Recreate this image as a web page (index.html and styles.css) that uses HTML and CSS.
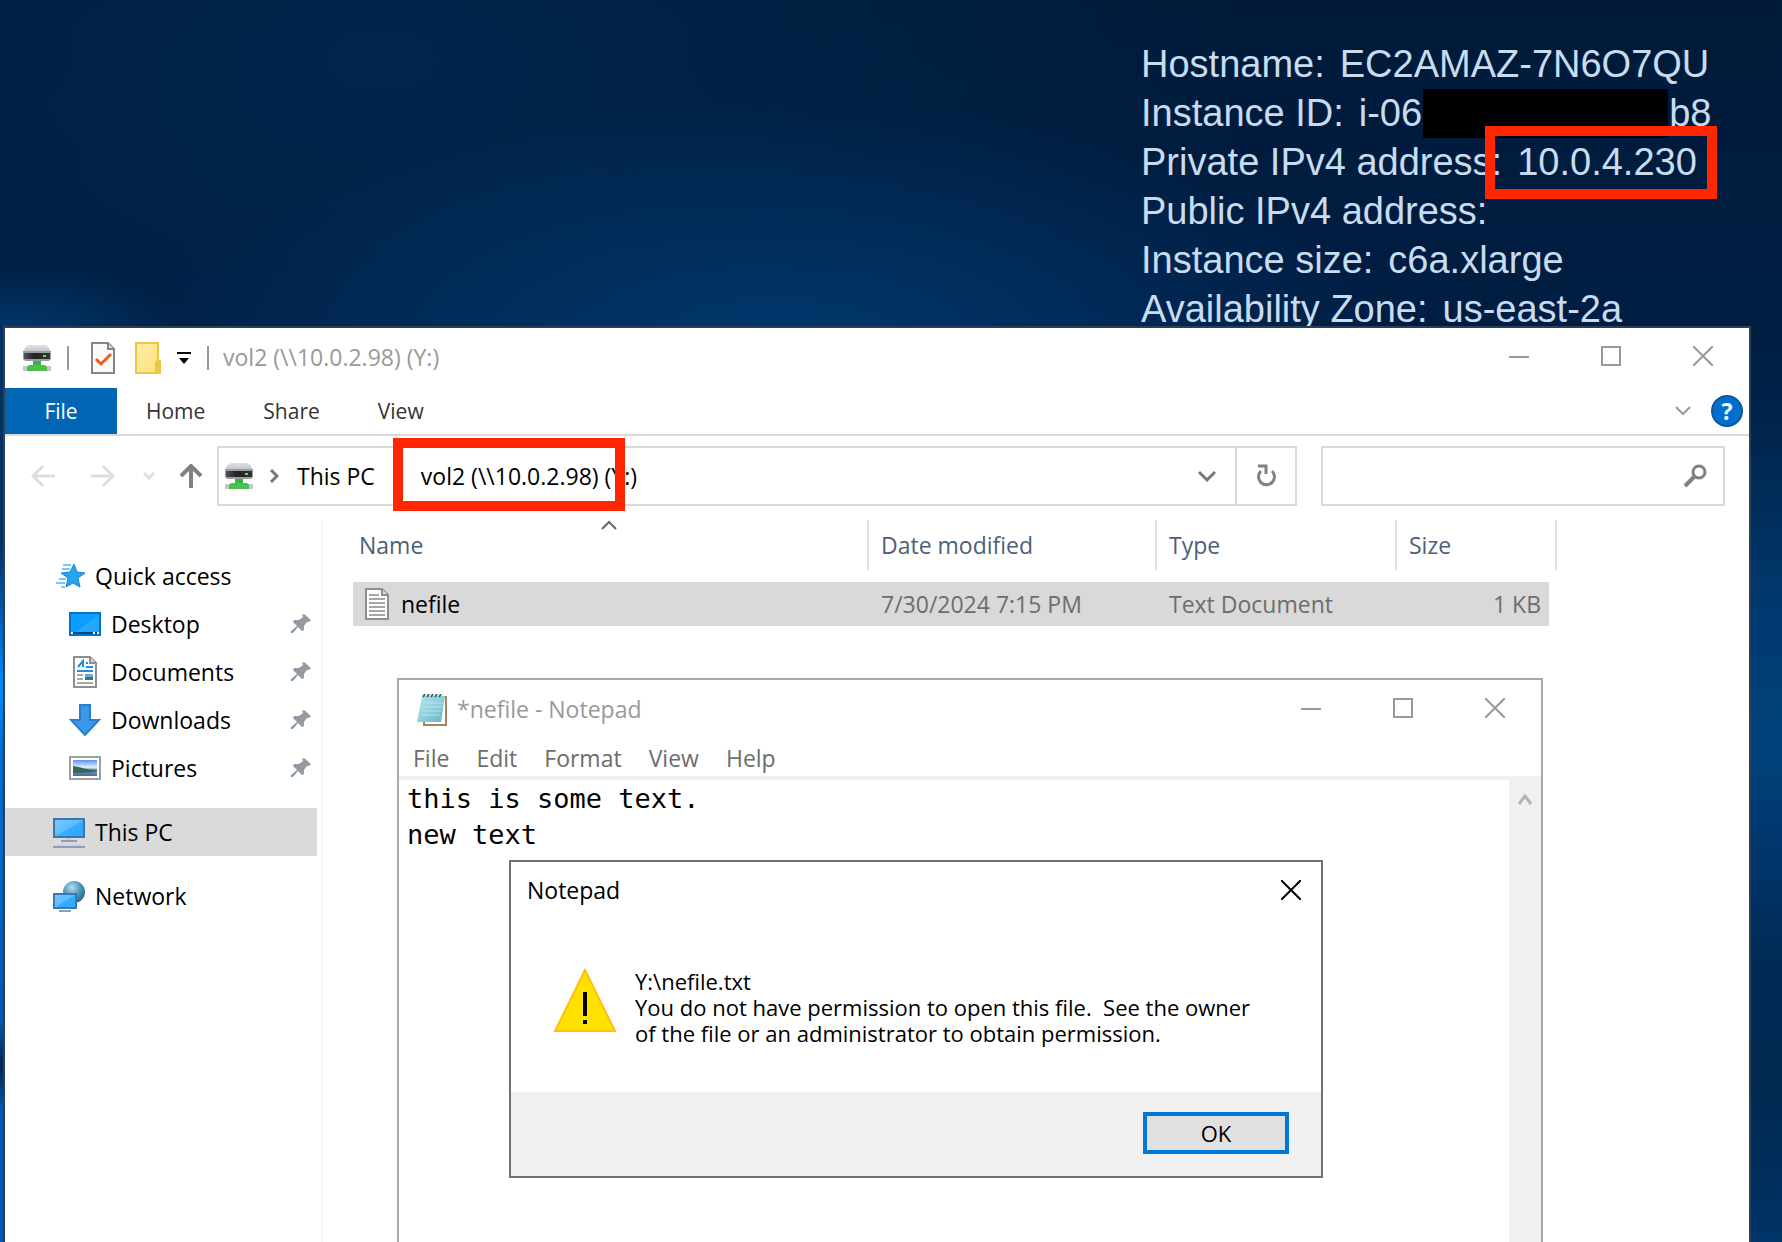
FILE: index.html
```html
<!DOCTYPE html>
<html lang="en">
<head>
<meta charset="utf-8">
<title>vol2 (\\10.0.2.98) (Y:)</title>
<link rel="stylesheet" href="styles.css">
</head>
<body>
<svg class="sprite" aria-hidden="true">
  <defs>
    <linearGradient id="g-shell" x1="0" y1="0" x2="0" y2="1"><stop offset="0" stop-color="#dfe2e6"/><stop offset="1" stop-color="#bfc3c8"/></linearGradient>
    <linearGradient id="g-face" x1="0" y1="0" x2="1" y2="0"><stop offset="0" stop-color="#555"/><stop offset=".4" stop-color="#222"/><stop offset="1" stop-color="#333"/></linearGradient>
    <linearGradient id="g-folder" x1="0" y1="0" x2="1" y2="1"><stop offset="0" stop-color="#ffeeaa"/><stop offset="1" stop-color="#ffdf78"/></linearGradient>
    <linearGradient id="g-screen" x1="0" y1="0" x2="1" y2="1"><stop offset="0" stop-color="#7cc8ff"/><stop offset=".5" stop-color="#5cbcff"/><stop offset=".52" stop-color="#38adff"/><stop offset="1" stop-color="#2ba6fb"/></linearGradient>
    <linearGradient id="g-desk" x1="0" y1="0" x2="1" y2="1"><stop offset="0" stop-color="#0a9cff"/><stop offset=".5" stop-color="#0c9dff"/><stop offset=".55" stop-color="#27a9ff"/><stop offset="1" stop-color="#1ca4ff"/></linearGradient>
    <linearGradient id="g-sky" x1="0" y1="0" x2="0" y2="1"><stop offset="0" stop-color="#5a93f5"/><stop offset=".45" stop-color="#e2f0fb"/><stop offset=".6" stop-color="#7f9fae"/><stop offset="1" stop-color="#3f6ea8"/></linearGradient>
    <radialGradient id="g-globe" cx=".4" cy=".3" r=".8"><stop offset="0" stop-color="#b9dcea"/><stop offset=".5" stop-color="#4a97bd"/><stop offset="1" stop-color="#1f5878"/></radialGradient>
    <linearGradient id="g-pad" x1="0" y1="0" x2="1" y2="1"><stop offset="0" stop-color="#b8e6ef"/><stop offset=".5" stop-color="#8fd0de"/><stop offset="1" stop-color="#62b1c6"/></linearGradient>
    <symbol id="i-drive" viewBox="0 0 28 26"><path d="M5 0h18l3 3 2 4H0l2-4z" fill="url(#g-shell)"/><path d="M0 6h28v8l-2 2H2l-2-2z" fill="#9a9da1"/><path d="M1 8h26v6H1z" fill="url(#g-face)"/><path d="M20 10h3v2h-3z" fill="#35ff35"/><path d="M10 16h8v4h-8z" fill="#35b24a"/><path d="M0 21h28v5H0z" fill="#c4c8c6"/><path d="M6 20h16l2 2v4H4v-4z" fill="#4cc04c"/></symbol>
    <symbol id="i-check" viewBox="0 0 24 32"><path d="M1 1h16l6 6v24H1z" fill="#fafafa" stroke="#858585" stroke-width="2"/><path d="M17 1v6h6" fill="#ddd" stroke="#858585" stroke-width="2"/><path d="M5 17l5 5 10-10" fill="none" stroke="#f4591c" stroke-width="3"/></symbol>
    <symbol id="i-folder" viewBox="0 0 26 32"><path d="M1 1h22v18h2v12H1z" fill="url(#g-folder)" stroke="#ecc544" stroke-width="2"/><path d="M21 31V20l2-1v12" fill="none" stroke="#ecc544" stroke-width="2"/></symbol>
    <symbol id="i-pin" viewBox="0 0 20 20"><path d="M13 0l7 6-2 2h-2l-3 4v4l-2 1-4-4-5 6H0v-2l6-5-4-4 1-2h5l4-3-1-2z" fill="#929ba4"/></symbol>
    <symbol id="i-min" viewBox="0 0 20 20"><path d="M0 11h20" fill="none" stroke="currentColor" stroke-width="2"/></symbol>
    <symbol id="i-max" viewBox="0 0 20 20"><path d="M1 1h18v18H1z" fill="none" stroke="currentColor" stroke-width="2"/></symbol>
    <symbol id="i-close" viewBox="0 0 20 20"><path d="M0 0l20 20M20 0L0 20" fill="none" stroke="currentColor" stroke-width="2"/></symbol>
    <symbol id="i-down" viewBox="0 0 18 12"><path d="M2 2l7 7 7-7" fill="none" stroke="currentColor" stroke-width="2"/></symbol>
  </defs>
</svg>
<main class="desktop">
  <dl class="info">
    <div><dt>Hostname:</dt><dd>EC2AMAZ-7N6O7QU</dd></div>
    <div><dt>Instance ID:</dt><dd>i-06<span class="redacted"></span>b8</dd></div>
    <div><dt>Private IPv4 address:</dt><dd>10.0.4.230</dd></div>
    <div><dt>Public IPv4 address:</dt><dd></dd></div>
    <div><dt>Instance size:</dt><dd>c6a.xlarge</dd></div>
    <div><dt>Availability Zone:</dt><dd>us-east-2a</dd></div>
  </dl>

  <section class="explorer">
    <header class="titlebar">
      <div class="quick-tools">
        <svg class="drive"><use href="#i-drive"/></svg>
        <span class="rule"></span>
        <button aria-label="Properties"><svg width="24" height="32"><use href="#i-check"/></svg></button>
        <button aria-label="New folder"><svg width="26" height="32"><use href="#i-folder"/></svg></button>
        <button class="customize" aria-label="Customize"><svg width="14" height="14" viewBox="0 0 14 14"><path d="M0 1h14v2H0zM2 7h10L7 13z"/></svg></button>
        <span class="rule"></span>
      </div>
      <h1 class="title">vol2 (\\10.0.2.98) (Y:)</h1>
      <div class="controls">
        <button aria-label="Minimize"><svg><use href="#i-min"/></svg></button>
        <button aria-label="Maximize"><svg><use href="#i-max"/></svg></button>
        <button aria-label="Close"><svg><use href="#i-close"/></svg></button>
      </div>
    </header>
    <nav class="ribbon">
      <button class="tab file">File</button>
      <button class="tab">Home</button>
      <button class="tab">Share</button>
      <button class="tab">View</button>
      <button class="expand" aria-label="Expand ribbon"><svg width="18" height="12"><use href="#i-down"/></svg></button>
      <button class="help" aria-label="Help">?</button>
    </nav>
    <div class="address-row">
      <div class="history">
        <button aria-label="Back"><svg width="24" height="24" viewBox="0 0 24 24"><path d="M24 12H2M12 2L2 12l10 10" fill="none" stroke="#dedede" stroke-width="3"/></svg></button>
        <button aria-label="Forward"><svg width="24" height="24" viewBox="0 0 24 24"><path d="M0 12h22M12 2l10 10-10 10" fill="none" stroke="#dedede" stroke-width="3"/></svg></button>
        <button aria-label="Recent"><svg width="12" height="8" viewBox="0 0 12 8"><path d="M1 1l5 5 5-5" fill="none" stroke="#dedede" stroke-width="3"/></svg></button>
        <button aria-label="Up"><svg width="24" height="24" viewBox="0 0 24 24"><path d="M12 24V2M2 12L12 2l10 10" fill="none" stroke="#808080" stroke-width="4"/></svg></button>
      </div>
      <div class="address">
        <svg class="drive"><use href="#i-drive"/></svg>
        <svg class="crumb-arrow" width="10" height="14" viewBox="0 0 10 14"><path d="M2 1l6 6-6 6" fill="none" stroke="#777" stroke-width="3"/></svg>
        <button class="crumb">This PC</button>
        <button class="crumb last">vol2 (\\10.0.2.98) (Y:)</button>
        <button class="drop" aria-label="Previous locations"><svg width="18" height="14" viewBox="0 0 18 14"><path d="M1 3l8 8 8-8" fill="none" stroke="#777" stroke-width="3"/></svg></button>
        <button class="refresh" aria-label="Refresh"><svg width="22" height="24" viewBox="0 0 22 24"><path d="M17 7a8 8 0 1 1-11 0M3 2h8v8" fill="none" stroke="#808080" stroke-width="3"/></svg></button>
      </div>
      <label class="search"><input type="search" aria-label="Search"><svg width="24" height="24" viewBox="0 0 24 24"><circle cx="16" cy="8" r="6" fill="none" stroke="#808080" stroke-width="3"/><path d="M12 12L2 22" stroke="#808080" stroke-width="4"/></svg></label>
    </div>
    <div class="panes">
      <nav class="tree">
        <a href="#" class="item"><svg width="30" height="26" viewBox="0 0 30 26"><path d="M19 1l3 8 8 1-7 5 2 9-7-4-7 4 2-9-7-5 9-1z" fill="#25a5ee" stroke="#1688cf"/><path d="M8 2h8M7 6h8M4 16h7M1 20h9M6 24h4" stroke="#7fc6f2" stroke-width="2"/></svg>Quick access</a>
        <a href="#" class="item sub"><svg width="32" height="24" viewBox="0 0 32 24"><path d="M1 1h30v22H1z" fill="url(#g-desk)" stroke="#0074c6" stroke-width="2"/><path d="M2 21h28" stroke="#00477c" stroke-width="2"/><path d="M2 21h2M24 21h2M28 21h2" stroke="#fff" stroke-width="2"/></svg>Desktop<svg class="pin"><use href="#i-pin"/></svg></a>
        <a href="#" class="item sub"><svg width="32" height="32" viewBox="0 0 32 32"><path d="M5 1h16l6 6v24H5z" fill="#fff" stroke="#8e8e8e" stroke-width="2"/><path d="M21 1v6h6" fill="#ddd" stroke="#8e8e8e" stroke-width="2"/><path d="M9 11l5-6v6M17 7h2M17 11h7M8 15h16" stroke="#1e90dc" stroke-width="2" fill="none"/><path d="M8 19h6M8 23h6M8 27h16" stroke="#a9a9a9" stroke-width="2"/><path d="M16 18h8v3h-8z" fill="#6ba5ef"/><path d="M16 21h8v3h-8z" fill="#3d7a5c"/></svg>Documents<svg class="pin"><use href="#i-pin"/></svg></a>
        <a href="#" class="item sub"><svg width="32" height="32" viewBox="0 0 32 32"><path d="M11 1h10v15h9L16 31 2 16h9z" fill="#3b98e8" stroke="#2a7dc9" stroke-width="2"/></svg>Downloads<svg class="pin"><use href="#i-pin"/></svg></a>
        <a href="#" class="item sub"><svg width="32" height="24" viewBox="0 0 32 24"><path d="M1 1h30v22H1z" fill="#fff" stroke="#a0a0a0" stroke-width="2"/><path d="M4 4h24v16H4z" fill="url(#g-sky)"/><path d="M4 10c8 1 14 4 24 4v1c-8 2-16 2-24 2z" fill="#3a6659"/></svg>Pictures<svg class="pin"><use href="#i-pin"/></svg></a>
        <a href="#" class="item group selected"><svg width="32" height="32" viewBox="0 0 32 32"><path d="M1 3h30v18H1z" fill="url(#g-screen)" stroke="#3878ac" stroke-width="2"/><path d="M14 22h4v2h-4z" fill="#c5cede"/><path d="M8 25h16M0 31h32" stroke="#8f9dbd" stroke-width="2"/><path d="M4 29h24" stroke="#c5cede"/></svg>This PC</a>
        <a href="#" class="item group"><svg width="32" height="32" viewBox="0 0 32 32"><circle cx="21" cy="12" r="11" fill="url(#g-globe)"/><path d="M1 14h22v14H1z" fill="url(#g-screen)" stroke="#3878ac" stroke-width="2"/><path d="M6 31h12" stroke="#8f9dbd" stroke-width="2"/></svg>Network</a>
      </nav>
      <table class="files">
        <colgroup><col class="c-name"><col class="c-date"><col class="c-type"><col class="c-size"></colgroup>
        <thead><tr><th><svg class="sort" width="16" height="10" viewBox="0 0 16 10"><path d="M1 9l7-7 7 7" fill="none" stroke="#666" stroke-width="2"/></svg>Name</th><th>Date modified</th><th>Type</th><th>Size</th></tr></thead>
        <tbody><tr><td><span class="filename"><svg width="24" height="32" viewBox="0 0 24 32"><path d="M1 1h16l6 6v24H1z" fill="#fff" stroke="#8e8e8e" stroke-width="2"/><path d="M17 1v6h6" fill="#ddd" stroke="#8e8e8e" stroke-width="2"/><path d="M4 7h10M4 11h16M4 15h16M4 19h16M4 23h16M4 27h16" stroke="#a6a6a6" stroke-width="2"/></svg>nefile</span></td><td>7/30/2024 7:15 PM</td><td>Text Document</td><td>1 KB</td></tr></tbody>
      </table>
    </div>
  </section>

  <section class="notepad">
    <header class="titlebar">
      <svg class="app-icon" width="32" height="32" viewBox="0 0 32 32"><path d="M8 4l22-1v28H8z" fill="#fff" stroke="#a5815c" stroke-width="2"/><path d="M6 2h23l-4 26H1z" fill="url(#g-pad)"/><path d="M7 9h20M6 13h20M6 17h19M5 21h19" stroke="#b6e2ea"/><path d="M7 3l2-3M11 3l2-3M15 3l2-3M19 3l2-3M23 3l2-3" stroke="#3f6670" stroke-width="2"/></svg>
      <h2 class="title">*nefile - Notepad</h2>
      <div class="controls">
        <button aria-label="Minimize"><svg><use href="#i-min"/></svg></button>
        <button aria-label="Maximize"><svg><use href="#i-max"/></svg></button>
        <button aria-label="Close"><svg><use href="#i-close"/></svg></button>
      </div>
    </header>
    <nav class="menu"><button>File</button><button>Edit</button><button>Format</button><button>View</button><button>Help</button></nav>
    <div class="editor">
      <textarea aria-label="Text" spellcheck="false">this is some text.
new text</textarea>
      <div class="scrollbar"><button aria-label="Scroll up"><svg width="16" height="14" viewBox="0 0 16 14"><path d="M2 12l6-8 6 8" fill="none" stroke="#b4b4b4" stroke-width="3"/></svg></button></div>
    </div>
  </section>

  <section class="dialog" role="alertdialog" aria-labelledby="dlg-title">
    <header class="dialog-head">
      <h2 id="dlg-title">Notepad</h2>
      <button aria-label="Close"><svg width="20" height="20"><use href="#i-close"/></svg></button>
    </header>
    <div class="dialog-body">
      <svg width="64" height="64" viewBox="0 0 64 64"><path d="M32 2l30 61H2z" fill="#ffe100" stroke="#ffbf0c" stroke-width="2"/><path d="M30 24h4v24h-4zM30 52h4v4h-4z"/></svg>
      <p>Y:\nefile.txt<br>You do not have permission to open this file.&nbsp; See the owner<br>of the file or an administrator to obtain permission.</p>
    </div>
    <footer class="dialog-foot"><button class="ok">OK</button></footer>
  </section>

  <div class="mark mark-ip"></div>
  <div class="mark mark-share"></div>
</main>
</body>
</html>
```

FILE: styles.css
```css
* { box-sizing: border-box; }
body { margin: 0; font-family: "Open Sans", "Noto Sans", sans-serif; font-size: 23px; line-height: 32px; color: #000; }
button { margin: 0; padding: 0; border: 0; background: none; font: inherit; color: inherit; }
h1, h2, p, dl, dd { margin: 0; font-size: inherit; font-weight: 400; }
svg { display: block; flex: none; }
.sprite { position: absolute; width: 0; height: 0; }

.desktop {
  position: relative;
  height: 100vh;
  overflow: hidden;
  background:
    linear-gradient(#003062, #002f62 214px, #0050a0 274px, #0088ff 359px, #006cd0 424px, #0058b0 694px, #002450 739px, #0058b0 784px, #0060c0) 0 326px / 5px 100% no-repeat,
    linear-gradient(#001e40, #002048 60px, #002a55 150px, #003a70 290px, #00427c 420px, #003870 500px, #002a55 640px, #002850 760px, #003468 920px) 100% 326px / 33px 100% no-repeat,
    radial-gradient(190px 70px at 0 336px, #003a70, #003a7000),
    radial-gradient(620px 250px at 780px 350px, #00386e, #00386e00),
    radial-gradient(900px 500px at 380px 60px, #00264c, #00264c00),
    linear-gradient(#001a38, #001e44 330px, #002a55);
}

.info {
  position: absolute;
  left: 1141px;
  top: 40px;
  font-family: "Liberation Sans", Arial, sans-serif;
  font-size: 38px;
  line-height: 49px;
  color: #c8dcf0;
  white-space: nowrap;
}
.info > div { display: flex; gap: 15px; }
.info dd { display: flex; }
.redacted { width: 245px; margin: 0 1px; background: #000; }

.explorer {
  position: absolute;
  left: 3px;
  right: 31px;
  top: 326px;
  bottom: 0;
  display: flex;
  flex-direction: column;
  border: 2px solid #2b3f55;
  border-bottom: 0;
  background: #fff;
}
.titlebar { display: flex; align-items: center; height: 60px; color: #999; }
.title { flex: 1; padding-bottom: 2px; }
.controls { display: flex; padding-bottom: 4px; }
.controls button { display: grid; place-items: center; width: 92px; height: 56px; }
.controls svg { width: 20px; height: 20px; }
.drive { width: 28px; height: 26px; }
.quick-tools { display: flex; align-items: center; padding: 0 14px 0 18px; gap: 20px; }
.quick-tools .rule { width: 2px; height: 24px; margin: 0 2px 0 -4px; background: #999; }
.quick-tools .rule:last-child { margin: 0 0 0 -4px; }
.customize { margin-left: -4px; }

.ribbon { display: flex; align-items: center; height: 48px; border-bottom: 2px solid #dadada; font-size: 21px; color: #333; }
.tab { height: 46px; padding: 0 29px; }
.tab.file { width: 112px; padding: 0; background: #0066b4; color: #fff; }
.expand { margin-left: auto; margin-right: 19px; color: #999; }
.help { width: 32px; height: 32px; margin-right: 6px; border: 2px solid #0b569c; border-radius: 50%; background: #006fd0; color: #fff; font-size: 23px; font-weight: 700; line-height: 28px; }

.address-row { display: flex; align-items: center; height: 80px; padding: 0 24px 0 26px; }
.history { display: grid; grid-template-columns: 60px 52px 36px 24px; align-items: center; margin-right: 14px; }
.address { display: flex; align-items: center; flex: 1; height: 60px; padding-left: 6px; border: 2px solid #dadada; }
.crumb-arrow { margin: 0 18px 0 16px; }
.crumb.last { margin: 0 auto 0 46px; }
.drop { width: 56px; display: grid; place-items: center; }
.refresh { display: grid; place-items: center; width: 60px; height: 56px; border-left: 2px solid #dadada; }
.search { display: flex; align-items: center; width: 404px; height: 60px; margin-left: 24px; padding-right: 16px; border: 2px solid #dadada; }
.search input { flex: 1; min-width: 0; height: 100%; border: 0; outline: 0; padding: 0 12px; font: inherit; }

.panes { display: flex; flex: 1; padding-top: 4px; }
.tree { width: 318px; margin-right: 30px; padding-top: 32px; padding-right: 4px; border-right: 2px solid #f7f7f7; }
.item { display: flex; align-items: center; gap: 10px; height: 48px; padding-left: 50px; color: #000; text-decoration: none; }
.item.sub { padding-left: 64px; }
.item.group { margin-top: 16px; padding-left: 48px; }
.item.selected { background: #dadada; }
.item .pin { width: 20px; height: 20px; margin-left: auto; margin-right: 6px; }

.files { width: 1204px; align-self: flex-start; border-collapse: separate; border-spacing: 0; table-layout: fixed; }
.c-name { width: 516px; }
.c-date { width: 288px; }
.c-type { width: 240px; }
.c-size { width: 160px; }
.files th { position: relative; height: 50px; padding: 0 12px; border-right: 2px solid #e2e2e2; text-align: left; font-weight: 400; color: #4c607a; }
.files th:first-child { padding-left: 6px; }
.sort { position: absolute; left: 248px; top: 0; }
.files tbody::before { content: ""; display: table-row; height: 12px; }
.files td { height: 44px; padding: 0 12px; background: #d9d9d9; color: #6d6d6d; }
.files td:first-child { color: #000; }
.files td:last-child { padding-right: 8px; border-right: 8px solid #fff; text-align: right; }
.filename { display: flex; align-items: center; gap: 12px; }

.notepad {
  position: absolute;
  left: 397px;
  top: 678px;
  bottom: 0;
  width: 1146px;
  display: flex;
  flex-direction: column;
  border: 2px solid #a9a9a9;
  border-bottom: 0;
  background: #fff;
}
.app-icon { margin: 0 9px 0 17px; }
.menu { display: flex; gap: 27px; height: 40px; padding-left: 14px; border-bottom: 4px solid #f0f0f0; color: #6d6d6d; }
.editor { display: flex; flex: 1; }
.editor textarea { flex: 1; align-self: flex-start; field-sizing: content; padding: 1px 8px; border: 0; outline: 0; resize: none; overflow: hidden; font: 27px/36px "DejaVu Sans Mono", monospace; color: #000; }
.scrollbar { display: flex; justify-content: center; align-items: flex-start; width: 32px; padding-top: 12px; background: #f0f0f0; }

.dialog { position: absolute; left: 509px; top: 860px; width: 814px; border: 2px solid #707070; background: #fff; }
.dialog-head { display: flex; align-items: center; justify-content: space-between; height: 60px; padding: 0 20px 4px 16px; }
.dialog-body { display: flex; gap: 18px; height: 170px; padding: 46px 0 0 42px; }
.dialog-body p { font-size: 22px; line-height: 26px; white-space: nowrap; }
.dialog-foot { display: flex; justify-content: flex-end; height: 84px; padding: 20px 32px 22px 0; background: #f0f0f0; }
.ok { width: 146px; border: 4px solid #0078d7; background: #e1e1e1; font-size: 22px; }

.mark { position: absolute; width: 232px; height: 73px; border: 10px solid #ff2600; }
.mark-ip { left: 1485px; top: 126px; }
.mark-share { left: 393px; top: 438px; }
```
